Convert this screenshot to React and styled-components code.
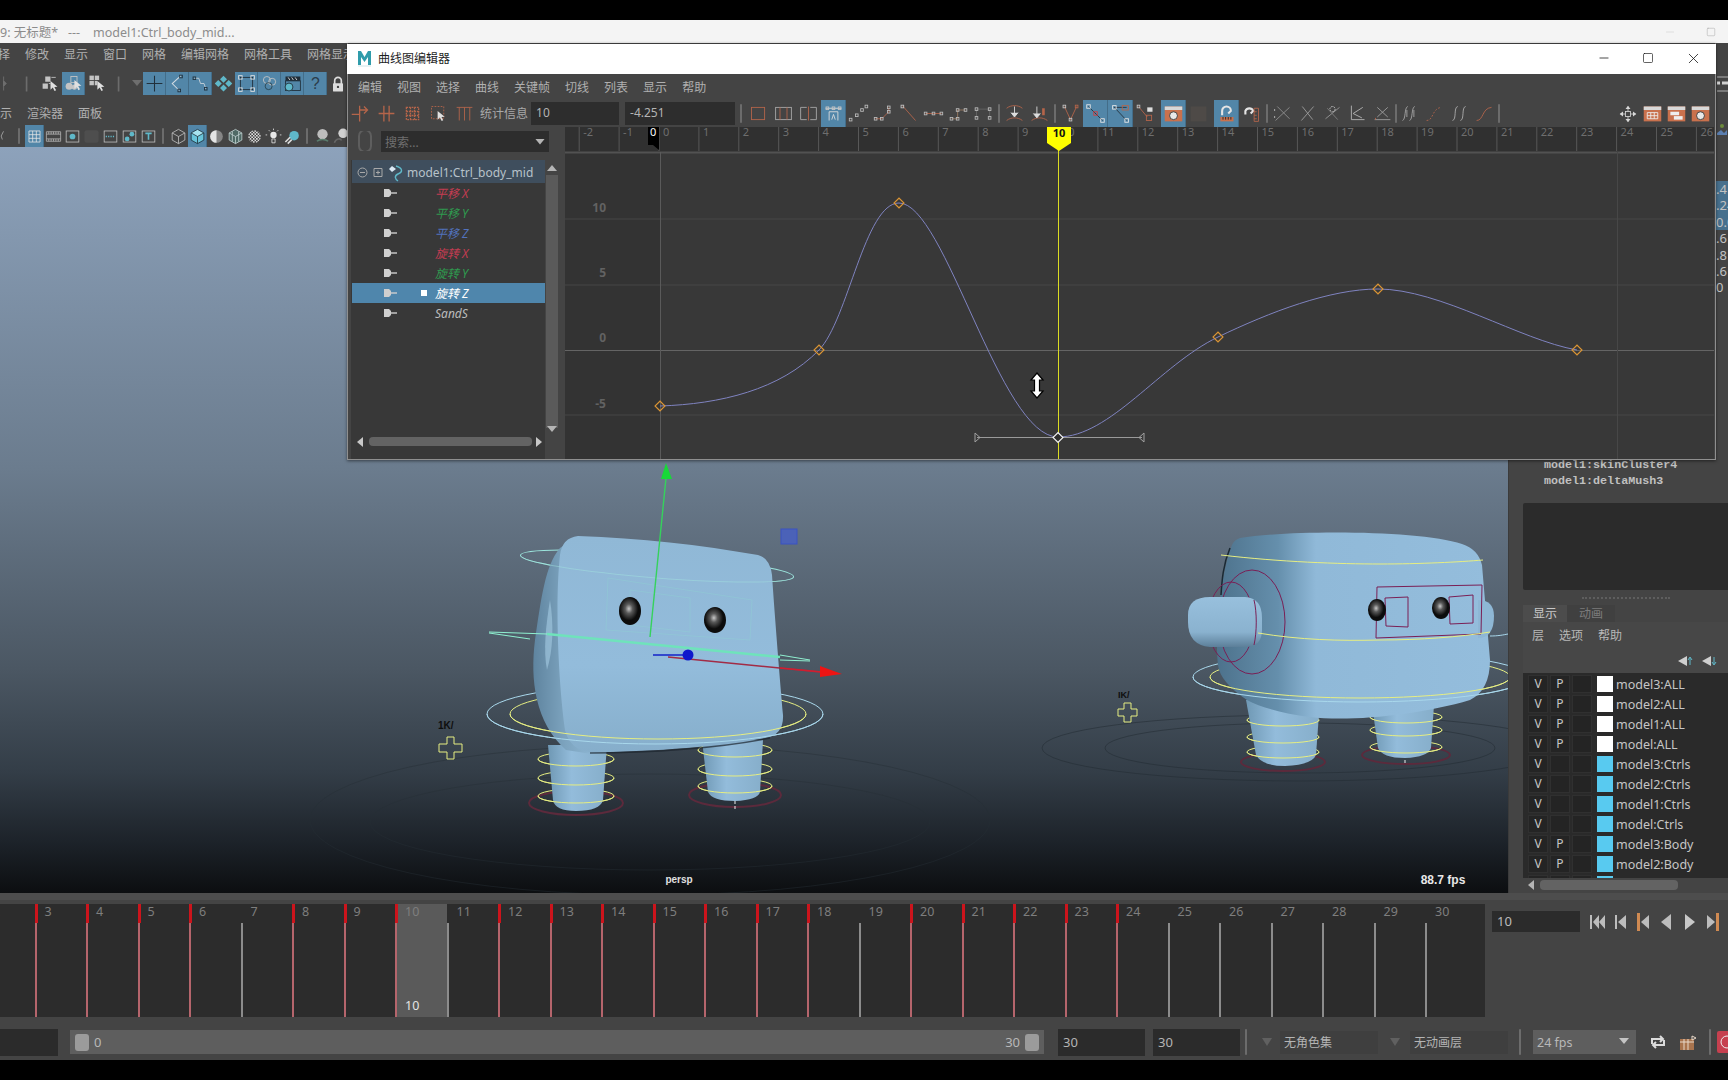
import React from 'react';
import styled, { createGlobalStyle } from 'styled-components';
import { Minus, Square, X } from 'lucide-react';

const ui = `"Noto Sans", "Noto Sans CJK SC", sans-serif`;
const BLUE = '#5286a8';
const ORANGE = '#b5654a';
const PANEL = '#c9714d';
const TEAL = '#5fb8c9';
const LIGHT = '#c4c4c4';

const GlobalStyle = createGlobalStyle`
	html, body {
		margin: 0;
		background: #000;
		overflow: hidden;
	}
	* {
		box-sizing: border-box;
	}
`;

const Screen = styled.div`
	position: relative;
	display: flex;
	flex-direction: column;
	width: 1728px;
	height: 1080px;
	overflow: hidden;
	font-family: ${ui};
	font-size: 12px;
	color: #b8b8b8;
	background: #444;
`;

const BlackBar = styled.div`
	flex: 0 0 ${p => p.$h}px;
	background: #000;
`;

const AppTitle = styled.div`
	flex: 0 0 23px;
	display: flex;
	align-items: center;
	padding-right: 12px;
	background: #f4f4f4;
	color: #8c8c8c;
	font-size: 12.5px;
	white-space: pre;
`;

const AppTitleControls = styled.div`
	display: flex;
	align-items: center;
	gap: 30px;
	margin-left: auto;
	color: #c8c8c8;
`;

const Workspace = styled.div`
	flex: 0 0 850px;
	display: flex;
	min-height: 0;
`;

const MainColumn = styled.div`
	flex: 0 0 1508px;
	display: flex;
	flex-direction: column;
	overflow: hidden;
`;

const MenuBar = styled.div`
	flex: 0 0 ${p => p.$h}px;
	display: flex;
	align-items: center;
	gap: 15px;
	margin-left: ${p => p.$ml || 0}px;
	padding: ${p => p.$pt || 0}px 0 ${p => p.$pb || 0}px;
	font-size: 12px;
	color: #b0b0b0;
	white-space: nowrap;
`;

const ToolRow = styled.div`
	flex: 0 0 ${p => p.$h}px;
	display: flex;
	align-items: stretch;
	margin-left: ${p => p.$ml || 0}px;
`;

const ToolCell = styled.div`
	flex: 0 0 ${p => p.$w}px;
	display: flex;
	align-items: center;
	justify-content: center;
	margin-left: ${p => p.$ml || 0}px;
	background: ${p => (p.$on ? BLUE : 'transparent')};
	box-shadow: ${p => (p.$on ? 'inset -1px 0 0 rgba(0, 0, 0, 0.18)' : 'none')};

	svg {
		display: block;
		overflow: visible;
	}
`;

const Sep = styled.div`
	flex: 0 0 ${p => p.$w}px;
	align-self: stretch;
	display: flex;
	justify-content: center;
	align-items: center;
	margin-left: ${p => p.$ml || 0}px;

	&::before {
		content: '';
		flex: 0 0 2px;
		height: 70%;
		border-radius: 2px;
		background: #6c6c6c;
	}
`;

const Viewport = styled.div`
	flex: 1;
	min-height: 0;
	background: linear-gradient(180deg, #8da2bb 0%, #6b7c8e 43%, #4b5763 70%, #333d47 84%, #1d232a 93%, #0c0e10 100%);

	svg {
		display: block;
	}
`;

const SideColumn = styled.div`
	flex: 0 0 220px;
	display: flex;
	flex-direction: column;
	padding-left: 14px;
	min-width: 0;
	border-left: 1px solid #3b3b3b;
	overflow: hidden;
`;

const ChannelValues = styled.div`
	flex: 0 0 412px;
	display: flex;
	flex-direction: column;
	align-items: flex-end;
	padding-top: 32px;
	font-size: 13px;
	line-height: 16.4px;

	svg {
		display: block;
		flex: 0 0 106px;
	}
`;

const ChannelValue = styled.div`
	width: 12px;
	overflow: hidden;
	white-space: nowrap;
	color: #c2c2c2;
	background: ${p => (p.$hot ? '#47708d' : 'transparent')};
`;

const DeformerList = styled.div`
	flex: 0 0 48px;
	padding-left: 21px;
	padding-top: 2px;
	font-family: "Liberation Mono", monospace;
	font-weight: bold;
	font-size: 11.7px;
	line-height: 16px;
	color: #c0c0c0;
`;

const InputLine = styled.div`
	flex: 0 0 87px;
	background: #2b2b2b;
	border-radius: 2px 0 0 2px;
`;

const Splitter = styled.div`
	flex: 0 0 15px;
	display: flex;
	align-items: center;
	justify-content: center;

	&::before {
		content: '';
		width: 88px;
		border-top: 2px dotted #5e5e5e;
	}
`;

const LayerTabs = styled.div`
	flex: 0 0 17px;
	display: flex;
	font-size: 12px;
	line-height: 17px;
`;

const LayerTab = styled.div`
	padding: 0 ${p => (p.$on ? 10 : 12)}px;
	color: ${p => (p.$on ? '#c8c8c8' : '#7c7c7c')};
	background: ${p => (p.$on ? '#4c4c4c' : '#404040')};
`;

const LayerMenu = styled.div`
	flex: 0 0 26px;
	display: flex;
	align-items: center;
	gap: 15px;
	padding-left: 9px;
	font-size: 12px;
	background: #474747;
`;

const LayerIcons = styled.div`
	flex: 0 0 25px;
	display: flex;
	align-items: center;
	gap: 9px;
	padding-left: 155px;
	background: #474747;
`;

const LayerList = styled.div`
	flex: 0 0 205px;
	padding-top: 1px;
	overflow: hidden;
	background: #2a2a2a;
`;

const LayerRow = styled.div`
	display: flex;
	align-items: center;
	height: 20px;
	padding-left: 6px;
	color: #c6c6c6;
	font-size: 12.5px;
`;

const LayerToggle = styled.div`
	flex: 0 0 18px;
	height: 16px;
	margin-right: 4px;
	text-align: center;
	line-height: 16px;
	font-size: 12px;
	background: #242424;
	outline: 1px solid #303030;
`;

const LayerSwatch = styled.div`
	flex: 0 0 16px;
	height: 16px;
	margin: 0 3px 0 2px;
	background: ${p => p.$color};
`;

const ScrollH = styled.div`
	flex: 0 0 ${p => p.$h}px;
	display: flex;
	align-items: center;
	gap: 3px;
	padding-left: ${p => p.$pl || 0}px;
	color: #b5b5b5;
`;

const ScrollThumb = styled.div`
	width: ${p => p.$w}px;
	height: ${p => p.$t || 10}px;
	border-radius: 4px;
	background: #636363;
`;

const TimelineRow = styled.div`
	flex: 0 0 131px;
	display: flex;
	padding-top: 11px;
	background: linear-gradient(180deg, #4d4d4d 0, #4d4d4d 7px, #444 7px);
`;

const TimeSlider = styled.div`
	flex: 0 0 1485px;
	height: 113px;
	overflow: hidden;
	background: #2c2c2c;
`;

const FrameTrack = styled.div`
	display: flex;
	height: 100%;
	margin-left: -17px;
`;

const Frame = styled.div`
	flex: 0 0 51.5px;
	display: flex;
	flex-direction: column;
	justify-content: space-between;
	padding: 0 0 2px 10px;
	color: #7e7e7e;
	font-size: 12.5px;
	line-height: 15px;
	background:
		${p => (p.$keyed
			? 'linear-gradient(#cc141c, #cc141c) 0 0 / 3px 19px no-repeat, linear-gradient(#b5656c, #b5656c) 0 19px / 2px 100% no-repeat'
			: 'linear-gradient(#8c8c8c, #8c8c8c) 0 19px / 2px 100% no-repeat')},
		${p => (p.$current ? '#5a5a5a' : 'transparent')};
`;

const FrameCurrent = styled.span`
	color: #e4e4e4;
	padding-bottom: 2px;
`;

const TransportArea = styled.div`
	flex: 1;
	display: flex;
	align-items: center;
	align-self: flex-start;
	padding: 7px 0 0 7px;
`;

const CurrentField = styled.div`
	flex: 0 0 88px;
	height: 21px;
	padding-left: 5px;
	line-height: 21px;
	font-size: 13px;
	color: #bbb;
	background: #2b2b2b;
`;

const TransportIcons = styled.div`
	display: flex;
	gap: 6px;
	margin-left: 9px;
`;

const RangeRow = styled.div`
	flex: 0 0 36px;
	display: flex;
	align-items: center;
`;

const DarkField = styled.div`
	flex: 0 0 ${p => p.$w}px;
	height: 27px;
	margin-left: ${p => p.$ml || 0}px;
	padding-left: 5px;
	line-height: 27px;
	font-size: 13px;
	color: #b4b4b4;
	background: #2b2b2b;
`;

const RangeSlider = styled.div`
	flex: 0 0 974px;
	height: 24px;
	margin-left: 12px;
	display: flex;
	align-items: center;
	padding: 0 5px 0 5px;
	gap: 5px;
	font-size: 13px;
	color: #b8b8b8;
	background: #5e5e5e;
`;

const RangeThumb = styled.div`
	width: 14px;
	height: 17px;
	border-radius: 3px;
	background: #9b9b9b;
`;

const RangeSpacer = styled.div`
	flex: 1;
`;

const NameField = styled.div`
	flex: 0 0 ${p => p.$w}px;
	height: 23px;
	margin-left: ${p => p.$ml}px;
	padding-left: 4px;
	line-height: 23px;
	font-size: 12px;
	color: #b4b4b4;
	background: #3f3f3f;
`;

const DownCaret = styled.div`
	flex: 0 0 10px;
	margin-left: ${p => p.$ml}px;
	height: 8px;
	background: #606060;
	clip-path: polygon(0 0, 100% 0, 50% 100%);
`;

const FpsSelect = styled.div`
	flex: 0 0 103px;
	height: 24px;
	margin-left: 12px;
	display: flex;
	align-items: center;
	justify-content: space-between;
	padding: 0 7px 0 4px;
	font-size: 12.5px;
	color: #b8b8b8;
	background: #5e5e5e;
`;

const IconSlot = styled.div`
	flex: 0 0 20px;
	margin-left: ${p => p.$ml}px;
	display: flex;
	justify-content: center;
`;

const CurveWindow = styled.section`
	position: absolute;
	left: 347px;
	top: 43px;
	width: 1369px;
	height: 417px;
	display: flex;
	flex-direction: column;
	background: #444;
	border: 1px solid #8f8f8f;
	border-top: 1px solid #3a3a3a;
	box-shadow: 0 1px 3px rgba(0, 0, 0, 0.5);
`;

const WindowTitle = styled.header`
	flex: 0 0 30px;
	display: flex;
	align-items: center;
	gap: 6px;
	margin: 0 -1px;
	padding: 0 0 2px 10px;
	background: #fff;
	color: #1e1e1e;
	font-size: 12px;
`;

const WindowControls = styled.div`
	display: flex;
	align-items: center;
	gap: 31px;
	margin-left: auto;
	padding-right: 14px;
	color: #111;
`;

const WindowMenu = styled.nav`
	flex: 0 0 26px;
	display: flex;
	align-items: center;
	gap: 15px;
	padding-left: 10px;
	font-size: 12px;
	color: #b0b0b0;
`;

const WindowTools = styled.div`
	flex: 0 0 27px;
	display: flex;
	align-items: stretch;
	margin-left: -1px;
`;

const StatsLabel = styled.div`
	flex: 0 0 48px;
	margin-left: 3px;
	line-height: 27px;
	font-size: 12px;
	white-space: nowrap;
	color: #a8a8a8;
`;

const StatsField = styled.div`
	flex: 0 0 ${p => p.$w}px;
	margin: 2px 0 2px ${p => p.$ml}px;
	padding-left: 5px;
	line-height: 22px;
	font-size: 12px;
	color: #b4b4b4;
	background: #2d2d2d;
`;

const RightTools = styled.div`
	display: flex;
	margin-left: auto;
	padding-right: 3px;
`;

const WindowBody = styled.div`
	flex: 1;
	display: flex;
	min-height: 0;
`;

const Outliner = styled.aside`
	flex: 0 0 215px;
	display: flex;
	flex-direction: column;
	padding-left: 3px;
`;

const SearchRow = styled.div`
	flex: 0 0 30px;
	display: flex;
	align-items: flex-start;
	gap: 7px;
	padding: 4px 14px 0 5px;
`;

const SearchBox = styled.div`
	flex: 1;
	height: 21px;
	display: flex;
	align-items: center;
	justify-content: space-between;
	padding: 0 4px;
	color: #6f6f6f;
	font-size: 12px;
	background: #2d2d2d;
`;

const SearchCaret = styled.span`
	width: 10px;
	height: 6px;
	background: #b4b4b4;
	clip-path: polygon(0 0, 100% 0, 50% 100%);
`;

const OutlinerBody = styled.div`
	flex: 1;
	display: flex;
	min-height: 0;
	padding-top: 3px;
`;

const TreeColumn = styled.div`
	flex: 0 0 191px;
	display: flex;
	flex-direction: column;
	padding-left: 1px;
	background: #383838;
`;

const TreeHeader = styled.div`
	flex: 0 0 23px;
	display: flex;
	align-items: center;
	gap: 2px;
	padding: 2px 0 0 4px;
	font-size: 12px;
	color: #b7c2ca;
	background: #3f4e5d;
`;

const CurveRow = styled.div`
	flex: 0 0 20px;
	display: flex;
	align-items: center;
	padding-left: 31px;
	background: ${p => (p.$on ? '#4f86ac' : 'transparent')};
`;

const CurveMark = styled.div`
	flex: 0 0 6px;
	height: 6px;
	margin-left: 24px;
	background: ${p => (p.$on ? '#fff' : 'transparent')};
`;

const CurveName = styled.span`
	margin-left: 8px;
	font-style: italic;
	font-size: 12px;
	color: ${p => p.$color};
`;

const TreeSpacer = styled.div`
	flex: 1;
`;

const VScroll = styled.div`
	flex: 0 0 12px;
	display: flex;
	flex-direction: column;
	align-items: center;
	justify-content: space-between;
	margin-left: 1px;
	padding: 4px 0 24px;
	color: #b5b5b5;
	background: linear-gradient(180deg, #444 0, #444 15px, #5a5a5a 15px, #5a5a5a 268px, #444 268px);
`;

const Graph = styled.div`
	flex: 1;
	min-width: 0;
	padding-left: 2px;

	svg {
		display: block;
	}
`;

const stroke = { fill: 'none', stroke: LIGHT, strokeWidth: 1 };

const Box = ({ x, y, c = LIGHT, s = 3 }) => (
	<rect x={x - s / 2} y={y - s / 2} width={s} height={s} fill="none" stroke={c} strokeWidth="1" />
);

const Nodes = ({ pts, line = true, c = '#bbb', lc = ORANGE }) => (
	<>
		{line && <polyline points={pts.map(p => p.join(',')).join(' ')} fill="none" stroke={lc} strokeWidth="1" />}
		{pts.map(([x, y], i) => <Box key={i} x={x} y={y} c={c} />)}
	</>
);

const Arrow = ({ x = 11, y = 10, c = '#e0e0e0' }) => (
	<path d={`M${x} ${y}l0 10 2.6-2.4 2 4 1.8-.9-2-3.8 3.6-.2z`} fill={c} />
);

const icons = {
	grip: <path d="M11 4v16M11 9l3 3-3 3z" stroke="#707070" fill="#707070" />,
	tick: <path d="M11.5 3v18" stroke="#6c6c6c" strokeWidth="2" />,
	sel1: <><rect x="6" y="4" width="6" height="6" fill={LIGHT} /><rect x="3" y="12" width="6" height="6" fill={LIGHT} /><path d="M13 5h5M12 12h-2" stroke={LIGHT} /><Arrow x={12} y={9} /></>,
	sel2: <><circle cx="7" cy="15" r="4" fill={LIGHT} /><circle cx="13" cy="16" r="3" fill={LIGHT} /><rect x="9" y="4" width="7" height="7" fill="none" stroke={LIGHT} /><Arrow x={13} y={8} /></>,
	sel3: <><rect x="4" y="3" width="5" height="5" fill={LIGHT} /><rect x="10" y="3" width="5" height="5" fill={LIGHT} /><rect x="4" y="9" width="5" height="5" fill={LIGHT} /><rect x="10" y="9" width="3" height="5" fill={LIGHT} /><Arrow x={13} y={9} /></>,
	plus: <path d="M12 3v18M3 12h18" stroke="#21303c" strokeWidth="1.2" />,
	snapC: <><path d="M16 3L6 12l8 8" fill="none" stroke="#d2dbe2" strokeWidth="1.2" /><Box x={16} y={4} c="#20303c" /><Box x={14} y={20} c="#20303c" /></>,
	snapP: <><path d="M5 6h5l2 6h4l2 6" fill="none" stroke="#c8d2da" /><Box x={5} y={6} c="#20303c" /><Box x={18} y={18} c="#20303c" /></>,
	diamond: <path d="M12 3l4 4-4 4-4-4zM12 13l4 4-4 4-4-4zM6 8l4 4-4 4-4-4zM18 8l4 4-4 4-4-4z" fill={TEAL} />,
	frame: <><rect x="5" y="5" width="14" height="14" fill="none" stroke="#1f2d38" /><Box x={5} y={5} c="#e0e0e0" s={4} /><Box x={19} y={5} c="#e0e0e0" s={4} /><Box x={5} y={19} c="#e0e0e0" s={4} /><Box x={19} y={19} c="#e0e0e0" s={4} /></>,
	flower: <><circle cx="9" cy="8" r="4" {...stroke} /><circle cx="15" cy="10" r="4" {...stroke} /><circle cx="11" cy="15" r="4" fill="none" stroke="#27424f" /></>,
	clap: <><rect x="4" y="9" width="17" height="11" fill="none" stroke="#20303c" /><path d="M4 4h17v5H4z" fill="#1f2d38" /><path d="M7 5l2 3M11 5l2 3M15 5l2 3" stroke="#ddd" /><circle cx="8" cy="16" r="4.5" fill={TEAL} stroke="#20303c" /></>,
	help: <text x="12" y="18" textAnchor="middle" fontSize="18" fill="#2b3c4a" fontFamily="Liberation Sans">?</text>,
	lock: <><path d="M8 12V8a4 4 0 0 1 8 0v4" fill="none" stroke="#ddd" strokeWidth="2" /><rect x="6" y="11" width="12" height="10" rx="1" fill="#ddd" /><circle cx="12" cy="15.5" r="1.4" fill="#444" /></>,
	slash: <path d="M6 4l-4 8 2 6" fill="none" stroke="#aaa" strokeWidth="1.4" />,
	grid: <path d="M5 5h14v14H5zM5 9.7h14M5 14.3h14M9.7 5v14M14.3 5v14" fill="none" stroke="#e6e6e6" />,
	film: <path d="M3 6h18v12H3zM3 9h18M3 15h18M6 6v3M9 6v3M12 6v3M15 6v3M18 6v3M6 15v3M9 15v3M12 15v3M15 15v3M18 15v3" fill="none" stroke="#b4b4b4" />,
	cam: <><rect x="4" y="5" width="16" height="14" fill="none" stroke="#c0c0c0" /><circle cx="12" cy="12" r="3.6" fill={TEAL} /></>,
	dark: <rect x="3" y="4" width="18" height="16" rx="3" fill="#4e4e4e" />,
	dots: <><rect x="4" y="5" width="16" height="14" fill="none" stroke="#c0c0c0" /><path d="M6 12h12" stroke={TEAL} strokeDasharray="1.5 1.5" strokeWidth="2" /></>,
	mini: <><rect x="4" y="5" width="16" height="14" fill="none" stroke="#c0c0c0" /><circle cx="9" cy="15" r="3" fill={TEAL} /><circle cx="15" cy="9" r="3" fill={TEAL} /></>,
	text: <><rect x="4" y="5" width="16" height="14" fill="none" stroke="#c0c0c0" /><path d="M8 8h8M12 8v8" stroke={TEAL} strokeWidth="2" /></>,
	cube: <path d="M12 3l8 4.5v9L12 21l-8-4.5v-9zM4 7.5l8 4.5 8-4.5M12 12v9" fill="none" stroke="#c4c4c4" />,
	cubeOn: <><path d="M12 3l8 4.5v9L12 21l-8-4.5v-9z" fill="#69c4da" /><path d="M4 7.5l8 4.5 8-4.5L12 3z" fill="#a7e3ef" /><path d="M4 7.5l8 4.5 8-4.5M12 12v9M12 3l8 4.5v9L12 21l-8-4.5v-9z" fill="none" stroke="#1d2c36" /></>,
	half: <><circle cx="12" cy="12" r="8" fill="#858585" /><path d="M12 4a8 8 0 0 0 0 16z" fill="#e4e4e4" /></>,
	cubeTex: <><path d="M12 3l8 4.5v9L12 21l-8-4.5v-9z" fill="#4f6a66" /><path d="M4 7.5l8 4.5 8-4.5M12 12v9M8 5.5v13M16 5.5v13M12 3l8 4.5v9L12 21l-8-4.5v-9z" fill="none" stroke="#c4d4d4" /></>,
	checker: <><defs><pattern id="chk" width="4" height="4" patternUnits="userSpaceOnUse"><rect width="2" height="2" fill="#ddd" /><rect x="2" y="2" width="2" height="2" fill="#ddd" /></pattern></defs><circle cx="12" cy="12" r="8" fill="url(#chk)" /></>,
	bulb: <><circle cx="12" cy="10" r="4" fill="#e8e8e8" /><path d="M10 15h4v5h-4zM12 2v2M4 10H2M22 10h-2M6 4l1.5 1.5M18 4l-1.5 1.5" stroke="#e8e8e8" fill="none" /></>,
	ball: <><circle cx="14" cy="11" r="6" fill={TEAL} /><path d="M3 19l6-6M6 21l5-5" stroke="#ddd" strokeWidth="2" /></>,
	skull: <><circle cx="12" cy="9" r="6.5" fill="#bdbdbd" /><path d="M5 18c3-3 11-3 14 0" stroke="#5c8070" strokeWidth="2" fill="none" /></>,
	ball2: <><circle cx="14" cy="8" r="6" fill="#d0d0d0" /><path d="M3 20c2-6 8-6 9-3" stroke="#666" strokeWidth="2" fill="none" /></>,
	key: <path d="M2 13h9M11 3v18M11 8h9M16 4l4 4-4 4" fill="none" stroke={ORANGE} strokeWidth="1.5" />,
	bars: <path d="M3 12h18M9 3v18M15 3v18" fill="none" stroke={ORANGE} strokeWidth="1.5" />,
	dotGrid: <path d="M5 5h14v14H5zM5 9.7h14M5 14.3h14M9.7 5v14M14.3 5v14" fill="none" stroke={ORANGE} strokeWidth="1.5" strokeDasharray="2 1" />,
	dashSel: <><rect x="4" y="4" width="14" height="14" fill="none" stroke={ORANGE} strokeDasharray="2 1.5" /><Arrow x={11} y={9} /></>,
	pi: <path d="M3 5h18M6 5v15M12 5v15M18 5v15" fill="none" stroke={ORANGE} />,
	rect: <rect x="4" y="5" width="15" height="14" fill="none" stroke={ORANGE} />,
	rectIn: <><rect x="3" y="5" width="18" height="14" fill="none" stroke="#aaa" /><path d="M8 5v14M16 5v14" stroke={ORANGE} /></>,
	rectGap: <><path d="M10 5H3v14h7M14 5h7v14h-7" fill="none" stroke="#aaa" /><path d="M12 4v16" stroke={ORANGE} /></>,
	autoOn: <><path d="M3 6h18" stroke="#ddd" /><Box x={5} y={6} /><Box x={12} y={6} /><Box x={19} y={6} /><path d="M7 20V10h10v10" fill="none" stroke="#ddd" /><path d="M10 19l2-6 2 6" stroke="#ddd" fill="none" /></>,
	t1: <Nodes pts={[[3, 19], [10, 14], [16, 8], [21, 4]]} line={false} />,
	t2: <Nodes pts={[[3, 18], [10, 18], [18, 10], [18, 5]]} />,
	t3: <><path d="M5 3l15 17" stroke={ORANGE} /><Box x={5} y={4} /></>,
	t4: <Nodes pts={[[3, 12], [12, 12], [21, 12]]} />,
	t5: <Nodes pts={[[4, 18], [11, 18], [11, 8], [20, 8]]} lc="#9a7a60" />,
	t6: <Nodes pts={[[4, 17], [4, 7], [19, 7], [19, 17]]} lc="#666" />,
	weight: <><path d="M3 6c5-4 13-4 18 0M3 20c5-4 13-4 18 0" fill="none" stroke={ORANGE} /><path d="M12 4v9M8 11l4 5 4-5" fill="#ddd" stroke="#ddd" /></>,
	weight2: <><path d="M3 20c5-4 13-4 18 0" fill="none" stroke={ORANGE} /><path d="M9 4v11M5 12l4 5 4-5" fill="#ddd" stroke="#ddd" /><path d="M15 6h3v8h-3z" fill={ORANGE} /></>,
	vee: <><path d="M5 4l7 15 7-15" fill="none" stroke={ORANGE} /><Box x={5} y={4} /><Box x={12} y={19} /><Box x={19} y={4} c={ORANGE} /></>,
	breakOn: <><path d="M4 4l16 16" stroke="#23313c" /><Box x={4} y={4} c="#e8e8e8" s={4} /><Box x={12} y={12} c="#d04040" s={4} /><Box x={20} y={20} c="#e8e8e8" s={4} /></>,
	unifyOn: <><path d="M5 5h14M5 5l14 15" stroke="#23313c" /><Box x={5} y={5} c="#e8e8e8" s={4} /><rect x="14" y="3" width="7" height="5" fill="none" stroke={ORANGE} /><Box x={19} y={20} c="#e8e8e8" s={4} /></>,
	lockKey: <><path d="M4 4l10 12" stroke={ORANGE} /><Box x={4} y={4} /><rect x="13" y="14" width="6" height="6" fill="none" stroke={ORANGE} /><rect x="14" y="5" width="6" height="5" fill="#ddd" /></>,
	panelClock: <><rect x="2" y="4" width="20" height="17" fill={PANEL} /><rect x="2" y="4" width="20" height="4" fill="#d8d8d8" /><circle cx="12" cy="14.5" r="4.5" fill="#e8e8e8" stroke="#333" /></>,
	panelDim: <rect x="3" y="4" width="18" height="17" fill="#4e4a47" />,
	panelGrid: <><rect x="2" y="4" width="20" height="17" fill={PANEL} /><rect x="2" y="4" width="20" height="4" fill="#d8d8d8" /><path d="M6 11h12v7H6zM6 14.5h12M10 11v7M14 11v7" fill="none" stroke="#eee" /></>,
	panelBars: <><rect x="2" y="4" width="20" height="17" fill={PANEL} /><rect x="2" y="4" width="20" height="4" fill="#d8d8d8" /><rect x="5" y="10" width="10" height="4" fill="#eee" /><rect x="9" y="15" width="10" height="4" fill="#eee" /></>,
	magnetOn: <><path d="M7 14V9a5 5 0 0 1 10 0l-3 3" fill="none" stroke="#e4e4e4" strokeWidth="2.4" /><path d="M5 16h15v5H5z" fill={PANEL} /><path d="M8 16v3M11 16v3M14 16v3M17 16v3" stroke="#222" /></>,
	magnet: <><path d="M5 13V9a5 5 0 0 1 9 0l-3 3" fill="none" stroke="#e4e4e4" strokeWidth="2.4" /><path d="M15 6h5v15h-5zM15 10h3M15 14h3M15 18h3" fill="none" stroke={ORANGE} /></>,
	x1: <><path d="M6 4l14 14M20 5L4 20" stroke="#909090" /><path d="M3 7v2M3 15v2" stroke="#ccc" /></>,
	x2: <path d="M6 4l12 15M19 4L5 20" stroke="#a0a0a0" />,
	x3: <><path d="M4 18L20 5" stroke="#999" /><circle cx="12" cy="7" r="3" fill="none" stroke="#ccc" strokeDasharray="2 1" /><path d="M6 6l12 13" stroke="#808080" /></>,
	x4: <path d="M5 3v16h15M18 5L7 12l10 5" fill="none" stroke="#b8b8b8" />,
	x5: <><path d="M3 19h18M6 5l12 11M18 5L6 16" stroke="#a0a0a0" /><path d="M4 19v-2" stroke={ORANGE} /></>,
	s1: <path d="M4 20c4-1 2-15 6-16M12 20c4-1 2-15 6-16M9 8v8M17 8v8" fill="none" stroke="#a8a8a8" />,
	s2: <path d="M3 20c8 0 6-14 17-15" fill="none" stroke={ORANGE} strokeDasharray="2 2" />,
	s3: <path d="M4 20c5-1 1-15 6-16M13 20c5-1 1-15 6-16" fill="none" stroke="#b0b0b0" />,
	s4: <path d="M3 20c8 0 6-14 17-15" fill="none" stroke={ORANGE} />,
	move: <><path d="M12 3v18M3 12h18" stroke="#d8d8d8" /><path d="M12 2l3 4H9zM12 22l3-4H9zM2 12l4-3v6zM22 12l-4-3v6z" fill="#d8d8d8" /><rect x="9" y="9" width="6" height="6" fill="#444" stroke="#d8d8d8" /></>,
};

const Icon = ({ name, size = 20 }) => (
	<svg width={size} height={size} viewBox="0 0 24 24">{icons[name]}</svg>
);

const mainTools = [
	['grip'], ['tick'], ['sel1'], ['sel2', true], ['sel3'], ['tick'], ['drop'],
	['plus', true], ['snapC', true], ['snapP', true], ['diamond'],
	['frame', true], ['flower', true], ['clap', true], ['help', true], ['lock'],
];

const panelTools = ['film', 'cam', 'dark', 'dots', 'mini', 'text'];
const shadeTools = ['cube', 'cubeOn', 'half', 'cubeTex', 'checker', 'bulb', 'ball'];

const curveGroupA = [
	['rect'], ['rectIn'], ['rectGap'], ['autoOn', true], ['t1'], ['t2'], ['t3'], ['t4'], ['t5'], ['t6'],
];

const curveGroupC = ['x1', 'x2', 'x3', 'x4', 'x5'];
const curveGroupD = ['s1', 's2', 's3', 's4'];

const frames = Array.from({ length: 29 }, (_, i) => i + 2);
const unkeyed = [2, 7, 11, 19, 25, 26, 27, 28, 29, 30];

const layers = [
	['model3:ALL', true, '#fff'],
	['model2:ALL', true, '#fff'],
	['model1:ALL', true, '#fff'],
	['model:ALL', true, '#fff'],
	['model3:Ctrls', false, '#58caf0'],
	['model2:Ctrls', false, '#58caf0'],
	['model1:Ctrls', false, '#58caf0'],
	['model:Ctrls', false, '#58caf0'],
	['model3:Body', true, '#58caf0'],
	['model2:Body', true, '#58caf0'],
	['model1:Body', true, '#58caf0'],
];

const curves = [
	['平移 X', '#c43c52'],
	['平移 Y', '#2f9a4f'],
	['平移 Z', '#5272bd'],
	['旋转 X', '#c43c52'],
	['旋转 Y', '#2f9a4f'],
	['旋转 Z', '#fff', true],
	['SandS', '#bdbdbd'],
];

const channels = [['.4', true], ['.24', true], ['0.0', true], ['.6'], ['.8'], ['.6'], ['0']];

const Plug = () => (
	<svg width="14" height="12" viewBox="0 0 14 12">
		<path d="M1 2h5l2 2v4L6 10H1z" fill="#cfcfcf" />
		<path d="M8 6h6" stroke="#cfcfcf" strokeWidth="1.4" />
	</svg>
);

const Tri = ({ dir = 'up', c = '#b5b5b5' }) => {
	const d = { up: 'M5 1l5 6H0z', down: 'M5 7L0 1h10z', left: 'M1 5l6-5v10z', right: 'M7 5L1 0v10z' }[dir];
	return <svg width="10" height="10" viewBox="0 0 10 10"><path d={d} fill={c} /></svg>;
};

const Ring = ({ cx, cy, rx, ry, c, w = 1, rot = 0, front = false, op = 1 }) => (
	front
		? <path d={`M${cx - rx} ${cy}A${rx} ${ry} 0 0 0 ${cx + rx} ${cy}`} fill="none" stroke={c} strokeWidth={w} opacity={op} transform={`rotate(${rot} ${cx} ${cy})`} />
		: <ellipse cx={cx} cy={cy} rx={rx} ry={ry} fill="none" stroke={c} strokeWidth={w} opacity={op} transform={`rotate(${rot} ${cx} ${cy})`} />
);

const Eye = ({ cx, cy, rx = 11, ry = 14 }) => <ellipse cx={cx} cy={cy} rx={rx} ry={ry} fill="url(#eye)" />;

const YEL = '#e6ee82';
const SKY = '#a9d8ec';
const WINE = '#5c2a3c';
const MAG = '#7a1f55';

const Scene = () => (
	<svg width="1508" height="746" viewBox="0 147 1508 746">
		<defs>
			<radialGradient id="eye" cx="0.45" cy="0.42" r="0.6">
				<stop offset="0" stopColor="#c8c8c8" />
				<stop offset="0.28" stopColor="#5a5a5a" />
				<stop offset="0.7" stopColor="#0c0c0c" />
			</radialGradient>
			<linearGradient id="faceL" x1="0" y1="0" x2="0" y2="1">
				<stop offset="0" stopColor="#90b8d6" />
				<stop offset="0.6" stopColor="#93bcdb" />
				<stop offset="1" stopColor="#86aecb" />
			</linearGradient>
			<linearGradient id="sideL" x1="0" y1="0" x2="1" y2="0">
				<stop offset="0" stopColor="#5f849f" />
				<stop offset="0.55" stopColor="#7da4bf" />
				<stop offset="1" stopColor="#8cb5d2" />
			</linearGradient>
			<linearGradient id="leg" x1="0" y1="0" x2="1" y2="0">
				<stop offset="0" stopColor="#6f98b4" />
				<stop offset="0.4" stopColor="#93bcdb" />
				<stop offset="1" stopColor="#86aeca" />
			</linearGradient>
			<linearGradient id="bodyR" gradientUnits="userSpaceOnUse" x1="1218" y1="0" x2="1490" y2="0">
				<stop offset="0" stopColor="#4d728c" />
				<stop offset="0.22" stopColor="#658fac" />
				<stop offset="0.36" stopColor="#90b9d8" />
				<stop offset="1" stopColor="#94bddc" />
			</linearGradient>
			<linearGradient id="snout" x1="0" y1="0" x2="0" y2="1">
				<stop offset="0" stopColor="#98c0dd" />
				<stop offset="0.7" stopColor="#8ab2cf" />
				<stop offset="1" stopColor="#5c7f99" />
			</linearGradient>
		</defs>

		<g>
			<Ring cx={650} cy={820} rx={340} ry={75} c="#262e36" op={0.45} />
			<Ring cx={650} cy={822} rx={280} ry={48} c="#262e36" op={0.45} />
			<Ring cx={1300} cy={748} rx={258} ry={33} c="#232b33" op={0.55} />
			<Ring cx={1300} cy={748} rx={195} ry={25} c="#232b33" op={0.55} />
		</g>

		<Ring cx={657} cy={566} rx={137} ry={12} rot={4.5} c="#9be4dc" />
		<Ring cx={655} cy={714} rx={168} ry={30} c={SKY} />
		<Ring cx={658} cy={714} rx={148} ry={25} c={YEL} />
		<Ring cx={576} cy={803} rx={47} ry={12} c={WINE} w={2} />
		<Ring cx={735} cy={795} rx={46} ry={12} c={WINE} w={2} />
		<Ring cx={576} cy={759} rx={38} ry={7} c={YEL} />
		<Ring cx={576} cy={778} rx={38} ry={7} c={YEL} />
		<Ring cx={576} cy={796} rx={38} ry={7} c={YEL} />
		<Ring cx={735} cy={750} rx={37} ry={7} c={YEL} />
		<Ring cx={735} cy={769} rx={37} ry={7} c={YEL} />
		<Ring cx={735} cy={786} rx={37} ry={7} c={YEL} />

		<path d="M548 745L553 800Q555 811 576 811Q600 811 603 800L607 745Z" fill="url(#leg)" />
		<path d="M702 740L708 792Q712 801 735 801Q758 800 760 792L763 740Z" fill="url(#leg)" />
		<Ring cx={576} cy={759} rx={38} ry={7} c={YEL} front />
		<Ring cx={576} cy={778} rx={38} ry={7} c={YEL} front />
		<Ring cx={576} cy={796} rx={38} ry={7} c={YEL} front />
		<Ring cx={735} cy={750} rx={37} ry={7} c={YEL} front />
		<Ring cx={735} cy={769} rx={37} ry={7} c={YEL} front />
		<Ring cx={735} cy={786} rx={37} ry={7} c={YEL} front />
		<path d="M735 801v9" stroke="#eee" strokeDasharray="3 2" />

		<path d="M560 548C545 565 541 600 535 640C530 680 535 722 566 750L592 754C575 700 570 620 575 538Z" fill="url(#sideL)" />
		<path d="M550 600C546 625 543 650 547 670C553 650 554 625 550 600Z" fill="#9dc3dc" opacity="0.7" />
		<path d="M578 536C640 538 700 545 758 555Q770 558 772 575C775 620 780 680 783 715Q784 735 765 738C710 748 640 752 590 752Q570 750 565 730C558 680 555 600 560 555Q562 538 578 536Z" fill="url(#faceL)" />
		<path d="M590 753C650 753 720 748 770 738" fill="none" stroke="#1b242c" strokeWidth="1.5" opacity="0.7" />

		<g fill="none" stroke="#8fdbd2" opacity="0.3">
			<path d="M608 578L752 600L750 640L606 630Z" />
			<path d="M630 590L690 598L690 632L630 625Z" />
		</g>
		<Eye cx={630} cy={611} />
		<Eye cx={715} cy={620} ry={13} />

		<Ring cx={657} cy={566} rx={137} ry={12} rot={4.5} c="#a5e6e0" op={0.45} front />
		<path d="M547 634L780 657" fill="none" stroke="#6fe3bb" strokeWidth="2.5" />
		<path d="M489 632L547 634M489 633L530 639M780 655L810 660M780 660L810 661" fill="none" stroke="#8ff0d0" />
		<Ring cx={655} cy={714} rx={168} ry={30} c={SKY} front />
		<Ring cx={658} cy={714} rx={148} ry={25} c={YEL} front />

		<path d="M650 637L666 478" stroke="#35d25c" strokeWidth="1.4" />
		<path d="M666 463L672 479H661Z" fill="#18d838" />
		<path d="M668 657L820 672" stroke="#a22b45" strokeWidth="1.4" />
		<path d="M780 668L822 672" stroke="#d01f2f" strokeWidth="1.4" />
		<path d="M820 666L842 674L820 677Z" fill="#ee1414" />
		<path d="M653 655H688" stroke="#1322c8" strokeWidth="1.4" />
		<circle cx="688" cy="655" r="5.5" fill="#0f18cc" />
		<rect x="781" y="529" width="16" height="15" fill="#4b62b8" stroke="#3a52c2" />

		<path d="M447 737h7v7h8v8h-8v7h-7v-7h-8v-8h8z" fill="none" stroke={YEL} />
		<text x="438" y="729" fontSize="10" fontWeight="bold" fill="#0e0e0e" fontFamily="Liberation Sans">1K/</text>

		<Ring cx={1283} cy={762} rx={42} ry={9} c={WINE} w={2} />
		<Ring cx={1406} cy={755} rx={44} ry={9} c={WINE} w={2} />
		<Ring cx={1283} cy={720} rx={36} ry={6} c={YEL} />
		<Ring cx={1283} cy={737} rx={36} ry={6} c={YEL} />
		<Ring cx={1283} cy={752} rx={36} ry={6} c={YEL} />
		<Ring cx={1406} cy={717} rx={36} ry={6} c={YEL} />
		<Ring cx={1406} cy={730} rx={36} ry={6} c={YEL} />
		<Ring cx={1406} cy={747} rx={36} ry={6} c={YEL} />
		<Ring cx={1360} cy={677} rx={150} ry={21} c={YEL} />
		<Ring cx={1360} cy={677} rx={167} ry={25} c={SKY} />
		<path d="M1246 700L1256 755Q1262 766 1285 766Q1312 765 1316 755L1320 700Z" fill="url(#leg)" />
		<path d="M1372 705L1378 748Q1382 758 1405 758Q1428 757 1431 748L1434 705Z" fill="url(#leg)" />
		<Ring cx={1283} cy={720} rx={36} ry={6} c={YEL} front />
		<Ring cx={1283} cy={737} rx={36} ry={6} c={YEL} front />
		<Ring cx={1283} cy={752} rx={36} ry={6} c={YEL} front />
		<Ring cx={1406} cy={717} rx={36} ry={6} c={YEL} front />
		<Ring cx={1406} cy={730} rx={36} ry={6} c={YEL} front />
		<Ring cx={1406} cy={747} rx={36} ry={6} c={YEL} front />
		<path d="M1405 760v3" stroke="#eee" />

		<path d="M1240 538C1290 530 1420 530 1462 544Q1478 549 1482 565L1490 660Q1490 690 1470 700C1420 715 1350 722 1310 717C1285 714 1262 708 1247 700Q1220 682 1218 665C1214 630 1222 570 1232 545Q1234 540 1240 538Z" fill="url(#bodyR)" />
		<path d="M1230 548C1223 565 1222 580 1221 595" stroke="#1a2933" strokeWidth="1.5" fill="none" />
		<path d="M1478 600Q1494 600 1494 616Q1494 638 1478 638Z" fill="#8eb7d5" />

		<ellipse cx="1252" cy="622" rx="33" ry="52" fill="none" stroke={MAG} />
		<ellipse cx="1231" cy="622" rx="23" ry="40" fill="none" stroke={MAG} />
		<path d="M1210 597H1245Q1262 598 1262 618V630Q1262 647 1245 647H1210Q1188 645 1188 622V615Q1188 597 1210 597Z" fill="url(#snout)" />
		<path d="M1254 600C1257 612 1257 632 1254 645" fill="none" stroke={MAG} />

		<path d="M1377 587L1482 585L1481 634L1376 638Z" fill="none" stroke={MAG} />
		<path d="M1385 598L1408 597V627L1386 626Z" fill="none" stroke={MAG} />
		<path d="M1449 597L1473 595V623L1450 624Z" fill="none" stroke={MAG} />
		<Eye cx={1377} cy={610} rx={9} ry={11} />
		<Eye cx={1441} cy={608} rx={9} ry={11} />

		<path d="M1221 555C1280 562 1340 564 1380 564C1420 564 1460 562 1483 560" fill="none" stroke={YEL} />
		<path d="M1258 633C1300 640 1340 641 1380 640C1420 640 1460 637 1490 632" fill="none" stroke={YEL} />
		<path d="M1490 636C1498 636 1503 635 1508 634" fill="none" stroke={SKY} />
		<Ring cx={1360} cy={677} rx={150} ry={21} c={YEL} front />
		<Ring cx={1360} cy={677} rx={167} ry={25} c={SKY} front />

		<path d="M1124 703h7v6h6v7h-6v6h-7v-6h-6v-7h6z" fill="none" stroke={YEL} />
		<text x="1118" y="698" fontSize="9" fontWeight="bold" fill="#0e0e0e" fontFamily="Liberation Sans">IK/</text>

		<text x="679" y="883" textAnchor="middle" fontSize="10" fontWeight="bold" fill="#e0e0e0" fontFamily="Liberation Sans">persp</text>
		<text x="1443" y="884" textAnchor="middle" fontSize="12" fontWeight="bold" fill="#e8e8e8" fontFamily="Liberation Sans">88.7 fps</text>
	</svg>
);

const FRAME_X = f => 659 + f * 39.9;
const keys = [[660, 406], [819, 350], [899, 203], [1218, 337], [1378, 289], [1577, 350]];

const CurveGraph = () => (
	<svg width="1149" height="332" viewBox="565 127 1149 332">
		<rect x="565" y="127" width="1149" height="332" fill="#383838" />
		<rect x="565" y="152" width="95" height="307" fill="#333" />
		<rect x="565" y="127" width="1149" height="25" fill="#303030" />
		<path d="M565 152.5H1714" stroke="#525252" strokeWidth="2" />
		{Array.from({ length: 29 }, (_, i) => i - 2).map(f => (
			<g key={f}>
				<path d={`M${FRAME_X(f)} 127V151`} stroke="#585858" />
				<text x={FRAME_X(f) + 4} y="136" fontSize="11" fill="#6e6e6e" fontFamily="Noto Sans">{f}</text>
			</g>
		))}
		<path d="M648 127H659V150L653 145H648Z" fill="#000" />
		<text x="650" y="136" fontSize="11" fill="#fff" fontFamily="Noto Sans">0</text>

		<path d="M565 219H1714M565 285H1714M565 415H1714" stroke="#474747" />
		<path d="M565 350.5H1714" stroke="#646464" />
		<path d="M660.5 152V459" stroke="#5a5a5a" />
		<path d="M1617.5 152V459" stroke="#474747" />
		<g fontFamily="Noto Sans" fontSize="12" fontWeight="bold" fill="#626262" textAnchor="end">
			<text x="606" y="212">10</text>
			<text x="606" y="277">5</text>
			<text x="606" y="342">0</text>
			<text x="606" y="408">-5</text>
		</g>

		<path d="M1058.5 150V459" stroke="#dcdc22" />
		<path d="M1047 127H1071V143L1059 151L1047 143Z" fill="#ffff00" />
		<text x="1059" y="137" textAnchor="middle" fontSize="11" fontWeight="bold" fill="#111" fontFamily="Noto Sans">10</text>

		<path d="M660 406C720 404 780 390 819 350C848 320 865 203 899 203C945 203 1000 437 1058 437C1110 437 1160 365 1218 337C1270 312 1330 289 1378 289C1440 289 1520 340 1577 350" fill="none" stroke="#7f83c0" />
		<path d="M977 437.5H1142" stroke="#9a9a9a" />
		<path d="M975 433v9l5-4.5zM1144 433v9l-5-4.5z" fill="none" stroke="#a0a0a0" />
		{keys.map(([x, y]) => (
			<rect key={x} x={x - 3.5} y={y - 3.5} width="7" height="7" fill="none" stroke="#dc9534" strokeWidth="1.2" transform={`rotate(45 ${x} ${y})`} />
		))}
		<rect x="1054.5" y="434" width="7" height="7" fill="#2e2e2e" stroke="#f0f0f0" strokeWidth="1.2" transform="rotate(45 1058 437.5)" />

		<path d="M1037 373l6 7h-3.500v11h3.500l-6 7-6-7h3.500v-11h-3.500z" fill="#fff" stroke="#000" strokeWidth="1.2" />
	</svg>
);

const Transport = ({ d, c = '#bdbdbd', extra }) => (
	<svg width="17" height="20" viewBox="0 0 17 20">
		{extra}
		<path d={d} fill={c} />
	</svg>
);

const App = () => (
	<Screen>
		<GlobalStyle />
		<BlackBar $h={20} />
		<AppTitle>
			<span>9: 无标题*   ---    model1:Ctrl_body_mid...</span>
			<AppTitleControls>
				<Minus size={12} strokeWidth={1} />
				<Square size={10} strokeWidth={1} color="#9a9a9a" />
			</AppTitleControls>
		</AppTitle>

		<Workspace>
			<MainColumn>
				<MenuBar $h={29} $ml={-14} $pb={7}>
					{['选择', '修改', '显示', '窗口', '网格', '编辑网格', '网格工具', '网格显示'].map(m => <span key={m}>{m}</span>)}
				</MenuBar>
				<ToolRow $h={23} $ml={-7.5}>
					{mainTools.map(([name, on], i) => (name === 'drop'
						? <ToolCell key={i} $w={12}><Tri dir="down" c="#6e6e6e" /></ToolCell>
						: <ToolCell key={i} $w={23} $on={on}><Icon name={name} size={name === 'lock' || name === 'tick' ? 20 : 21} /></ToolCell>
					))}
				</ToolRow>
				<MenuBar $h={30} $ml={-12} $pt={6}>
					{['显示', '渲染器', '面板'].map(m => <span key={m}>{m}</span>)}
				</MenuBar>
				<ToolRow $h={22}>
					<ToolCell $w={8}><Icon name="slash" size={14} /></ToolCell>
					<Sep $w={10.5} />
					<ToolCell $w={19} $on><Icon name="grid" size={19} /></ToolCell>
					{panelTools.map(n => <ToolCell key={n} $w={19}><Icon name={n} size={19} /></ToolCell>)}
					<Sep $w={11} />
					{shadeTools.map(n => <ToolCell key={n} $w={19} $on={n === 'cubeOn'}><Icon name={n} size={19} /></ToolCell>)}
					<Sep $w={11} />
					<ToolCell $w={19}><Icon name="skull" size={19} /></ToolCell>
					<ToolCell $w={19}><Icon name="ball2" size={19} /></ToolCell>
				</ToolRow>
				<Viewport>
					<Scene />
				</Viewport>
			</MainColumn>

			<SideColumn>
				<ChannelValues>
					<svg width="12" height="106" viewBox="0 0 12 106">
						<path d="M1 2h11M1 16h11" stroke="#b0b0b0" fill="none" />
						<path d="M1 8h3M6 8h6" stroke="#d0d0d0" strokeWidth="3" />
						<circle cx="6" cy="51" r="2" fill="#6c8a3c" />
						<path d="M1 58l4-3 3 3 3-3v5H1z" fill="#5b7fb0" />
					</svg>
					{channels.map(([v, hot], i) => <ChannelValue key={i} $hot={hot}>{v}</ChannelValue>)}
				</ChannelValues>
				<DeformerList>
					<div>model1:skinCluster4</div>
					<div>model1:deltaMush3</div>
				</DeformerList>
				<InputLine />
				<Splitter />
				<LayerTabs>
					<LayerTab $on>显示</LayerTab>
					<LayerTab>动画</LayerTab>
				</LayerTabs>
				<LayerMenu>
					<span>层</span>
					<span>选项</span>
					<span>帮助</span>
				</LayerMenu>
				<LayerIcons>
					<svg width="15" height="10" viewBox="0 0 15 10"><path d="M0 5l9-5v10z" fill="#cfcfcf" /><path d="M12 2v7M10 4l2-3 2 3" stroke={TEAL} fill="none" /></svg>
					<svg width="15" height="10" viewBox="0 0 15 10"><path d="M0 5l9-5v10z" fill="#cfcfcf" /><path d="M12 1v7M10 6l2 3 2-3" stroke={TEAL} fill="none" /></svg>
				</LayerIcons>
				<LayerList>
					{layers.map(([name, p, color]) => (
						<LayerRow key={name}>
							<LayerToggle>V</LayerToggle>
							<LayerToggle>{p ? 'P' : ''}</LayerToggle>
							<LayerToggle />
							<LayerSwatch $color={color} />
							{name}
						</LayerRow>
					))}
				</LayerList>
				<ScrollH $h={13} $pl={4}>
					<Tri dir="left" />
					<ScrollThumb $w={138} />
				</ScrollH>
			</SideColumn>
		</Workspace>

		<TimelineRow>
			<TimeSlider>
				<FrameTrack>
					{frames.map(f => (
						<Frame key={f} $keyed={!unkeyed.includes(f)} $current={f === 10}>
							<span>{f}</span>
							{f === 10 && <FrameCurrent>10</FrameCurrent>}
						</Frame>
					))}
				</FrameTrack>
			</TimeSlider>
			<TransportArea>
				<CurrentField>10</CurrentField>
				<TransportIcons>
					<Transport d="M1 3h2v14H1zM10 3v14L4 10zM16 3v14l-6-7z" />
					<Transport d="M3 3h2v14H3zM14 3v14L6 10z" />
					<Transport d="M14 3v14L6 10z" extra={<path d="M2 1h3v18H2z" fill="#d08a52" />} />
					<Transport d="M13 2v16L3 10z" />
					<Transport d="M4 2v16l10-8z" c="#c8c8c8" />
					<Transport d="M3 3v14l8-7z" extra={<path d="M12 1h3v18h-3z" fill="#d08a52" />} />
				</TransportIcons>
			</TransportArea>
		</TimelineRow>

		<RangeRow>
			<DarkField $w={58} />
			<RangeSlider>
				<RangeThumb />
				<span>0</span>
				<RangeSpacer />
				<span>30</span>
				<RangeThumb />
			</RangeSlider>
			<DarkField $w={87} $ml={14}>30</DarkField>
			<DarkField $w={87} $ml={8}>30</DarkField>
			<Sep $w={2} $ml={5} />
			<DownCaret $ml={15} />
			<NameField $w={98} $ml={8}>无角色集</NameField>
			<DownCaret $ml={12} />
			<NameField $w={98} $ml={10}>无动画层</NameField>
			<Sep $w={2} $ml={11} />
			<FpsSelect>
				24 fps
				<Tri dir="down" c="#c4c4c4" />
			</FpsSelect>
			<IconSlot $ml={12}>
				<svg width="18" height="18" viewBox="0 0 18 18"><path d="M3 11V6h10M11 3l3 3-3 3M15 7v5H5M7 15l-3-3 3-3" fill="none" stroke="#dcdcdc" strokeWidth="2" /></svg>
			</IconSlot>
			<IconSlot $ml={10}>
				<svg width="18" height="18" viewBox="0 0 18 18"><rect x="1" y="6" width="14" height="11" fill="#a9744e" /><path d="M1 9h14M5 6v11M9 6v11M13 3l4 2-4 2z" stroke="#e8d8c8" fill="none" /></svg>
			</IconSlot>
			<Sep $w={2} $ml={11} />
			<IconSlot $ml={6}>
				<svg width="20" height="22" viewBox="0 0 20 22"><rect width="20" height="22" rx="2" fill="#c6404f" /><circle cx="10" cy="11" r="6" fill="none" stroke="#eee" /></svg>
			</IconSlot>
		</RangeRow>

		<BlackBar $h={20} />

		<CurveWindow>
			<WindowTitle>
				<svg width="15" height="17" viewBox="0 0 15 17">
					<path d="M1 15V1h3l3.500 6L11 1h3v14h-3V7L7.500 12 4 7v8z" fill="#2f9cab" />
					<path d="M1 16h13" stroke="#cde5e8" />
				</svg>
				<span>曲线图编辑器</span>
				<WindowControls>
					<Minus size={14} strokeWidth={1.3} />
					<Square size={12} strokeWidth={1.3} />
					<X size={17} strokeWidth={1.1} />
				</WindowControls>
			</WindowTitle>
			<WindowMenu>
				{['编辑', '视图', '选择', '曲线', '关键帧', '切线', '列表', '显示', '帮助'].map(m => <span key={m}>{m}</span>)}
			</WindowMenu>
			<WindowTools>
				{['key', 'bars', 'dotGrid', 'dashSel', 'pi'].map(n => <ToolCell key={n} $w={26}><Icon name={n} size={21} /></ToolCell>)}
				<StatsLabel>统计信息</StatsLabel>
				<StatsField $w={88} $ml={3}>10</StatsField>
				<StatsField $w={110} $ml={6}>-4.251</StatsField>
				<Sep $w={11} />
				{curveGroupA.map(([n, on]) => <ToolCell key={n} $w={25} $on={on}><Icon name={n} size={21} /></ToolCell>)}
				<Sep $w={6} />
				<ToolCell $w={25}><Icon name="weight" size={21} /></ToolCell>
				<ToolCell $w={25}><Icon name="weight2" size={21} /></ToolCell>
				<Sep $w={5.5} />
				<ToolCell $w={25}><Icon name="vee" size={21} /></ToolCell>
				<ToolCell $w={25} $on><Icon name="breakOn" size={21} /></ToolCell>
				<ToolCell $w={25} $on><Icon name="unifyOn" size={21} /></ToolCell>
				<ToolCell $w={25}><Icon name="lockKey" size={21} /></ToolCell>
				<ToolCell $w={25} $ml={3} $on><Icon name="panelClock" size={21} /></ToolCell>
				<ToolCell $w={25}><Icon name="panelDim" size={21} /></ToolCell>
				<ToolCell $w={25} $ml={3} $on><Icon name="magnetOn" size={21} /></ToolCell>
				<ToolCell $w={25}><Icon name="magnet" size={21} /></ToolCell>
				<Sep $w={6} />
				{curveGroupC.map(n => <ToolCell key={n} $w={25}><Icon name={n} size={21} /></ToolCell>)}
				<Sep $w={2} />
				{curveGroupD.map(n => <ToolCell key={n} $w={25}><Icon name={n} size={21} /></ToolCell>)}
				<Sep $w={5} />
				<RightTools>
					<ToolCell $w={24}><Icon name="move" size={20} /></ToolCell>
					<ToolCell $w={24}><Icon name="panelGrid" size={21} /></ToolCell>
					<ToolCell $w={24}><Icon name="panelBars" size={21} /></ToolCell>
					<ToolCell $w={24}><Icon name="panelClock" size={21} /></ToolCell>
				</RightTools>
			</WindowTools>
			<WindowBody>
				<Outliner>
					<SearchRow>
						<svg width="18" height="20" viewBox="0 0 18 20">
							<path d="M3 5a6 6 0 0 1 12 0M15 15a6 6 0 0 1-12 0M3 5v10M15 5v10" fill="none" stroke="#5e5e5e" strokeWidth="2" />
						</svg>
						<SearchBox>
							<span>搜索...</span>
							<SearchCaret />
						</SearchBox>
					</SearchRow>
					<OutlinerBody>
						<TreeColumn>
							<TreeHeader>
								<svg width="13" height="13" viewBox="0 0 13 13"><circle cx="6.5" cy="6.5" r="4.5" fill="none" stroke="#a8a8a8" /><path d="M4 6.5h5" stroke="#a8a8a8" /></svg>
								<svg width="14" height="13" viewBox="0 0 13 13"><path d="M2.5 2.5h8v8h-8zM4.5 6.5h4M6.5 4.5v4" fill="none" stroke="#a8a8a8" /></svg>
								<svg width="18" height="20" viewBox="0 0 18 20"><path d="M5 3l4 3-4 3-3-3z" fill="#dbe9f5" /><path d="M9 3c7 2 7 6 2 8-4 2-3 5 0 7" fill="none" stroke={TEAL} strokeWidth="1.4" /></svg>
								<span>model1:Ctrl_body_mid</span>
							</TreeHeader>
							{curves.map(([name, color, on]) => (
								<CurveRow key={name} $on={on}>
									<Plug />
									<CurveMark $on={on} />
									<CurveName $color={color}>{name}</CurveName>
								</CurveRow>
							))}
							<TreeSpacer />
							<ScrollH $h={17} $pl={4}>
								<Tri dir="left" c="#c8c8c8" />
								<ScrollThumb $w={163} $t={9} />
								<Tri dir="right" c="#c8c8c8" />
							</ScrollH>
							<ScrollH $h={9} />
						</TreeColumn>
						<VScroll>
							<Tri dir="up" />
							<Tri dir="down" />
						</VScroll>
					</OutlinerBody>
				</Outliner>
				<Graph>
					<CurveGraph />
				</Graph>
			</WindowBody>
		</CurveWindow>
	</Screen>
);

export default App;
